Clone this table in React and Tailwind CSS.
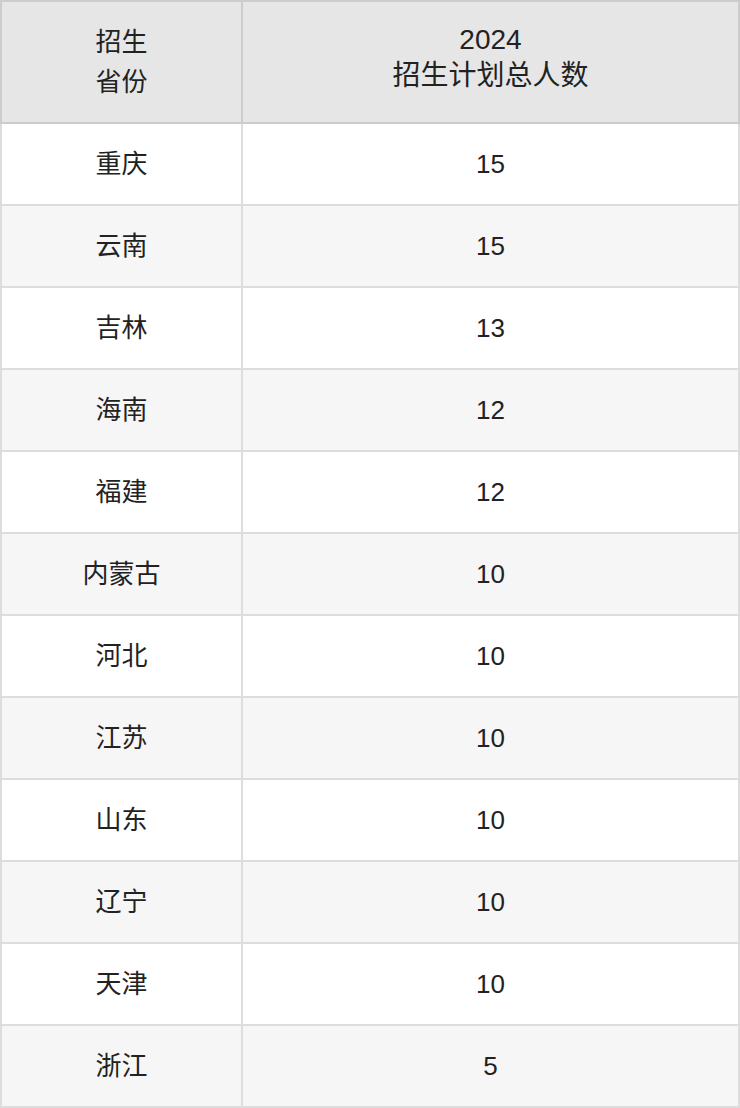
import React from "react";

const rows = [
  ["重庆", "15"],
  ["云南", "15"],
  ["吉林", "13"],
  ["海南", "12"],
  ["福建", "12"],
  ["内蒙古", "10"],
  ["河北", "10"],
  ["江苏", "10"],
  ["山东", "10"],
  ["辽宁", "10"],
  ["天津", "10"],
  ["浙江", "5"],
];

export default function App() {
  return (
    <div className="w-[740px] bg-white text-[26px] leading-[38px] text-[#222222] font-['Liberation_Sans','Noto_Sans_CJK_SC',sans-serif]">
      <div className="flex border-t-2 border-l-2 border-[#cccccc] bg-[#e6e6e6]">
        <div className="w-[241px] h-[122px] border-r-2 border-b-2 border-[#cccccc] flex flex-col items-center justify-center text-center leading-[40px]">
          <span>招生</span>
          <span>省份</span>
        </div>
        <div className="w-[497px] h-[122px] border-r-2 border-b-2 border-[#cccccc] flex flex-col items-center justify-center text-center text-[28px] leading-[36px] pb-[8px]">
          <span>2024</span>
          <span>招生计划总人数</span>
        </div>
      </div>
      {rows.map(([p, n], i) => (
        <div
          key={p}
          className={`flex border-l-2 border-[#dddddd] ${i % 2 === 1 ? "bg-[#f6f6f6]" : "bg-white"}`}
        >
          <div className="w-[241px] h-[82px] border-r-2 border-b-2 border-[#dddddd] flex items-center justify-center">
            {p}
          </div>
          <div className="w-[497px] h-[82px] border-r-2 border-b-2 border-[#dddddd] flex items-center justify-center">
            {n}
          </div>
        </div>
      ))}
    </div>
  );
}
